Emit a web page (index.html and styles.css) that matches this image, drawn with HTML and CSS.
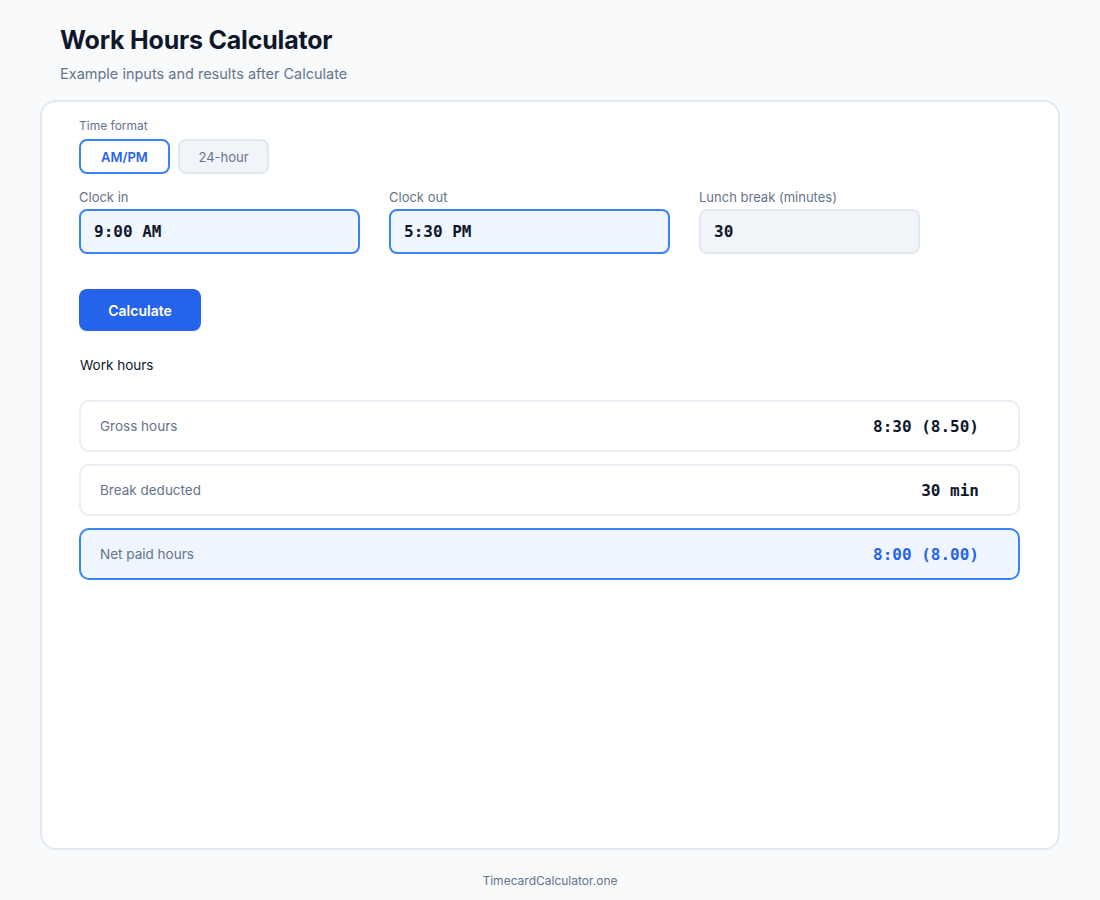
FILE: index.html
```html
<!DOCTYPE html>
<html lang="en">
<head>
    <meta charset="UTF-8">
    <meta name="viewport" content="width=device-width, initial-scale=1.0">
    <title>Work Hours Calculator</title>
    <link rel="stylesheet" href="styles.css">
</head>
<body>

    <header class="page-head">
        <h1>Work Hours Calculator</h1>
        <p class="subtitle">Example inputs and results after Calculate</p>
    </header>

    <main class="card">
        <div class="field-label">Time format</div>
        <div class="toggle">
            <button type="button" class="toggle-btn active">AM/PM</button>
            <button type="button" class="toggle-btn">24-hour</button>
        </div>

        <div class="inputs">
            <div class="field">
                <label for="clockIn">Clock in</label>
                <input type="text" id="clockIn" class="time-input active" value="9:00 AM">
            </div>
            <div class="field">
                <label for="clockOut">Clock out</label>
                <input type="text" id="clockOut" class="time-input active" value="5:30 PM">
            </div>
            <div class="field field-small">
                <label for="lunch">Lunch break (minutes)</label>
                <input type="text" id="lunch" class="time-input" value="30">
            </div>
        </div>

        <button type="button" class="calc-btn">Calculate</button>

        <h2 class="results-title">Work hours</h2>

        <div class="results">
            <div class="result-row">
                <span class="result-label">Gross hours</span>
                <span class="result-value">8:30 (8.50)</span>
            </div>
            <div class="result-row">
                <span class="result-label">Break deducted</span>
                <span class="result-value">30 min</span>
            </div>
            <div class="result-row highlight">
                <span class="result-label">Net paid hours</span>
                <span class="result-value">8:00 (8.00)</span>
            </div>
        </div>
    </main>

    <footer class="footer">TimecardCalculator.one</footer>

</body>
</html>
```

FILE: styles.css
```css
body {
    font-family: Inter, "Liberation Sans", Arial, sans-serif;
    background-color: #f8fafc;
    color: #0f172a;
    margin: 0;
    padding: 0 40px;
}

.page-head {
    padding: 22px 20px 0;
    height: 78px;
}

h1 {
    font-size: 25px;
    font-weight: 700;
    letter-spacing: -0.2px;
    margin: 0;
    line-height: 36px;
    color: #0f172a;
}

.subtitle {
    margin: 7px 0 0;
    font-size: 14.5px;
    line-height: 18px;
    color: #64748b;
}

.card {
    box-sizing: border-box;
    height: 750px;
    background-color: #fff;
    border: 2px solid #e2e8f0;
    border-radius: 16px;
    padding: 16px 38px 0 37px;
}

.field-label,
label {
    display: block;
    font-size: 12px;
    line-height: 16px;
    color: #64748b;
}

label {
    font-size: 13px;
    margin-bottom: 4px;
}

.toggle {
    display: flex;
    gap: 8px;
    margin-top: 5px;
}

.toggle-btn {
    font-family: inherit;
    width: 91px;
    height: 35px;
    border-radius: 8px;
    border: 2px solid #e2e8f0;
    background-color: #f1f5f9;
    color: #64748b;
    font-size: 13px;
    cursor: pointer;
}

.toggle-btn.active {
    background-color: #fff;
    border-color: #3b82f6;
    color: #2563eb;
    font-weight: 600;
}

.inputs {
    display: flex;
    gap: 29px;
    margin-top: 15px;
}

.field {
    width: 281px;
}

.field-small {
    width: 221px;
}

.time-input {
    box-sizing: border-box;
    width: 100%;
    height: 45px;
    padding: 0 13px;
    border: 2px solid #e2e8f0;
    border-radius: 8px;
    background-color: #f1f5f9;
    font-family: "DejaVu Sans Mono", monospace;
    font-weight: 700;
    font-size: 16px;
    color: #0f172a;
    outline: none;
}

.time-input.active {
    border-color: #3b82f6;
    background-color: #eff6ff;
}

.calc-btn {
    font-family: inherit;
    margin-top: 35px;
    width: 122px;
    height: 42px;
    border: none;
    border-radius: 8px;
    background-color: #2563eb;
    color: #fff;
    font-size: 14px;
    font-weight: 600;
    cursor: pointer;
}

.calc-btn:hover {
    background-color: #1d4ed8;
}

.results-title {
    font-size: 13.5px;
    font-weight: 400;
    line-height: 18px;
    margin: 25px 0 0 1px;
    color: #0f172a;
}

.results {
    display: flex;
    flex-direction: column;
    gap: 12px;
    margin-top: 26px;
}

.result-row {
    box-sizing: border-box;
    height: 52px;
    display: flex;
    justify-content: space-between;
    align-items: center;
    padding: 0 39px 0 19px;
    border: 2px solid #e8edf3;
    border-radius: 10px;
    background-color: #fff;
}

.result-label {
    font-size: 13.5px;
    color: #64748b;
}

.result-value {
    font-family: "DejaVu Sans Mono", monospace;
    font-weight: 700;
    font-size: 16px;
    color: #0f172a;
}

.result-row.highlight {
    border-color: #3b82f6;
    background-color: #eff6ff;
}

.result-row.highlight .result-value {
    color: #2563eb;
}

.footer {
    text-align: center;
    font-size: 12px;
    color: #64748b;
    padding: 23px 0 14px;
}
```
